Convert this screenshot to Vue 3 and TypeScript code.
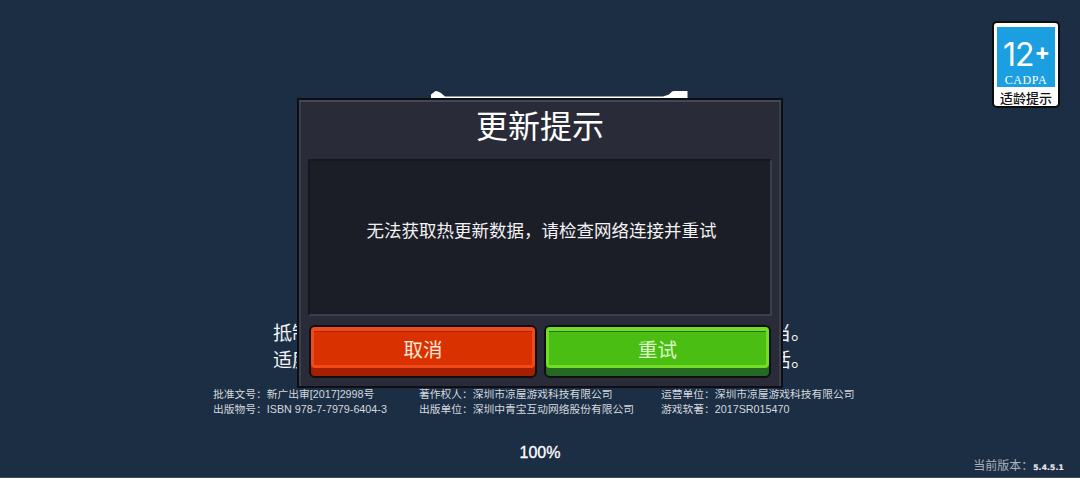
<template>
  <div class="screen">
    <div class="logo-slot">
      <svg class="logo" width="258" height="7" viewBox="0 0 258 7">
        <path d="M0 7V3.5L2 2 4.5 0 7 .5 10 2 14 5.5H232L238 3.5 241 .5 243 0H256.5V7Z" fill="#fff" />
      </svg>
    </div>

    <div class="notice">
      <p>抵制不良游戏，拒绝盗版游戏。注意自我保护，谨防受骗上当。</p>
      <p>适度游戏益脑，沉迷游戏伤身。合理安排时间，享受健康生活。</p>
    </div>

    <div class="credits">
      <div class="credit-col" v-for="col in credits" :key="col[0]">
        <span v-for="line in col" :key="line">{{ line }}</span>
      </div>
    </div>

    <div class="percent">100%</div>

    <div class="version">当前版本：<b>5.4.5.1</b></div>

    <div class="age-badge">
      <div class="age-blue">
        <div class="age-num">12<i>+</i></div>
        <div class="age-org">CADPA</div>
      </div>
      <div class="age-label">适龄提示</div>
    </div>

    <div class="dialog">
      <div class="dialog-title">更新提示</div>
      <div class="dialog-body">无法获取热更新数据，请检查网络连接并重试</div>
      <div class="dialog-actions">
        <button class="btn btn-red"><span class="btn-face">取消</span></button>
        <button class="btn btn-green"><span class="btn-face">重试</span></button>
      </div>
    </div>
  </div>
</template>

<script setup lang="ts">
const credits: string[][] = [
  ['批准文号：新广出审[2017]2998号', '出版物号：ISBN 978-7-7979-6404-3'],
  ['著作权人：深圳市凉屋游戏科技有限公司', '出版单位：深圳中青宝互动网络股份有限公司'],
  ['运营单位：深圳市凉屋游戏科技有限公司', '游戏软著：2017SR015470'],
]
</script>

<style>
html, body {
  margin: 0;
  background: #fff;
}
</style>

<style scoped>
.screen {
  position: relative;
  width: 1080px;
  height: 478px;
  overflow: hidden;
  background: #1c2e44;
  font-family: "Liberation Sans", "Noto Sans CJK SC", sans-serif;
  color: #fff;
  display: flex;
  flex-direction: column;
  align-items: center;
  border-bottom: 1px solid #3d4d5e;
  box-sizing: border-box;
}

.logo-slot {
  height: 98px;
  width: 258px;
  margin-left: 40px;
  display: flex;
  align-items: flex-end;
  flex: none;
}

.logo {
  display: block;
}

.notice {
  margin-top: 222px;
  margin-left: 3px;
  font-size: 19.2px;
  line-height: 27px;
  text-align: center;
  white-space: nowrap;
  color: #f2f4f6;
}

.notice p {
  margin: 0;
}

.credits {
  margin-top: 13px;
  display: flex;
  width: 643px;
  font-size: 10.75px;
  line-height: 15px;
  color: #d3d8de;
  margin-left: -11px;
}

.credit-col {
  display: flex;
  flex-direction: column;
  white-space: nowrap;
}

.credit-col:nth-child(1) { width: 206px; }
.credit-col:nth-child(2) { width: 242px; }

.percent {
  margin-top: 26px;
  font-size: 16px;
  line-height: 20px;
  -webkit-text-stroke: 0.3px #fff;
}

.version {
  position: absolute;
  right: 16px;
  bottom: 1px;
  font-size: 12px;
  line-height: 16px;
  color: #a9b2bd;
  white-space: nowrap;
}

.version b {
  font-family: "DejaVu Sans", sans-serif;
  font-size: 7.5px;
  font-weight: 700;
  color: #e8ebee;
  letter-spacing: 0.2px;
  -webkit-text-stroke: 0.2px #e8ebee;
}

.age-badge {
  position: absolute;
  left: 992px;
  top: 21px;
  width: 68px;
  height: 87px;
  box-sizing: border-box;
  padding: 4px 3px 0;
  background: #fff;
  border: 2px solid #0c0c0c;
  border-radius: 5px;
}

.age-blue {
  height: 60px;
  background: #1b9fe0;
  display: flex;
  flex-direction: column;
  align-items: center;
}

.age-num {
  margin-top: 11px;
  height: 33px;
  font-family: Inter, "Liberation Sans", sans-serif;
  font-size: 32px;
  line-height: 33px;
  font-weight: 400;
  letter-spacing: -1px;
  display: flex;
}

.age-num i {
  font-style: normal;
  font-size: 23px;
  line-height: 29px;
  font-weight: 700;
  margin-left: 1px;
}

.age-org {
  margin-top: 3px;
  font-family: "Liberation Serif", serif;
  font-size: 12px;
  line-height: 13px;
  letter-spacing: 0.6px;
}

.age-label {
  margin-top: 4px;
  font-size: 13px;
  line-height: 16px;
  font-weight: 500;
  color: #111;
  text-align: center;
  white-space: nowrap;
}

.dialog {
  position: absolute;
  left: 297px;
  top: 98px;
  width: 486px;
  height: 290px;
  box-sizing: border-box;
  padding: 0 9px;
  background: #292c38;
  border: 2px solid #0d0f14;
  box-shadow: inset 0 2px 0 #434854, inset 2px 0 0 #3a3f4b, inset -2px 0 0 #3a3f4b;
  display: flex;
  flex-direction: column;
}

.dialog-title {
  height: 59px;
  flex: none;
  text-align: center;
  font-size: 32px;
  line-height: 54px;
}

.dialog-body {
  height: 157px;
  flex: none;
  box-sizing: border-box;
  padding: 0 0 16px 3px;
  background: #1b1d27;
  border: 2px solid #15171e;
  border-bottom-color: #3a3f4b;
  border-right-color: #3a3f4b;
  display: flex;
  align-items: center;
  justify-content: center;
  font-size: 17.5px;
  color: #f2f2f2;
}

.dialog-actions {
  margin-top: 9px;
  padding: 0 1px;
  display: flex;
  justify-content: space-between;
}

.btn {
  font-family: inherit;
  width: 228px;
  height: 53px;
  padding: 0;
  font-size: 19.5px;
  border: 2px solid #0e0f12;
  border-radius: 6px;
  box-sizing: border-box;
  display: flex;
  align-items: flex-start;
}

.btn-face {
  display: flex;
  align-items: center;
  justify-content: center;
  width: 100%;
  height: 41px;
  box-sizing: border-box;
  border-width: 4px 3px 3px;
  border-style: solid;
  border-radius: 4px;
}

.btn-red {
  background: #a51f00;
  color: #fbe6d8;
}

.btn-red .btn-face {
  background: #d93200;
  border-color: #ef4a1a;
  box-shadow: inset 0 1px 0 #a62400;
}

.btn-green {
  width: 227px;
  background: #246a24;
  color: #dcf7c8;
}

.btn-green .btn-face {
  background: #4bbe14;
  border-color: #72dd24;
  box-shadow: inset 0 1px 0 #24702a;
}
</style>
